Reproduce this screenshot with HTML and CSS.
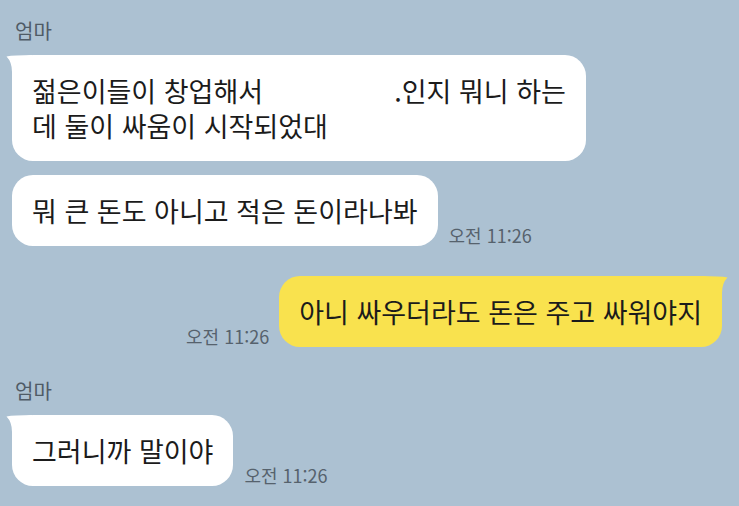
FILE: index.html
```html
<!DOCTYPE html>
<html lang="ko">
<head>
    <meta charset="UTF-8">
    <meta name="viewport" content="width=device-width, initial-scale=1.0">
    <title>엄마</title>
    <link rel="stylesheet" href="styles.css">
</head>
<body>
    <div class="chat">
        <div class="sender">엄마</div>
        <div class="row">
            <div class="bubble other first">
                <svg class="tail" viewBox="0 0 26 22"><path d="M0.5 1.5 Q8 0 26 0 V22 H6 V17 Q6 7 0.5 1.5 Z"/></svg>
                <span class="line">젊은이들이 창업해서<span class="blank"></span>.인지 뭐니 하는</span>
                <span class="line">데 둘이 싸움이 시작되었대</span>
            </div>
        </div>
        <div class="row">
            <div class="bubble other">뭐 큰 돈도 아니고 적은 돈이라나봐</div>
            <span class="time">오전 11:26</span>
        </div>

        <div class="row mine">
            <span class="time">오전 11:26</span>
            <div class="bubble me first">
                <svg class="tail" viewBox="0 0 26 22"><path d="M0.5 1.5 Q8 0 26 0 V22 H6 V17 Q6 7 0.5 1.5 Z"/></svg>
                아니 싸우더라도 돈은 주고 싸워야지
            </div>
        </div>

        <div class="sender second">엄마</div>
        <div class="row">
            <div class="bubble other first">
                <svg class="tail" viewBox="0 0 26 22"><path d="M0.5 1.5 Q8 0 26 0 V22 H6 V17 Q6 7 0.5 1.5 Z"/></svg>
                그러니까 말이야
            </div>
            <span class="time">오전 11:26</span>
        </div>
    </div>
</body>
</html>
```

FILE: styles.css
```css
body {
    margin: 0;
    background-color: #acc1d2;
    font-family: "Noto Sans CJK KR", "Noto Sans", sans-serif;
}
.chat {
    padding: 19px 17px 0 12px;
}
.sender {
    margin: 0 0 12px 3px;
    font-size: 20px;
    line-height: 24px;
    color: #4f5b66;
}
.sender.second {
    margin-top: 32px;
}
.row {
    display: flex;
    align-items: flex-end;
    gap: 11px;
    margin-bottom: 14px;
}
.row.mine {
    justify-content: flex-end;
    margin-top: 30px;
    gap: 10px;
}
.bubble {
    position: relative;
    padding: 18px 20px 18px 20px;
    border-radius: 21px;
    font-size: 27px;
    line-height: 35px;
    color: #1b1b1b;
    white-space: nowrap;
}
.bubble .line {
    display: block;
}
.bubble.other {
    background-color: #ffffff;
}
.bubble.me {
    background-color: #f9e24e;
}
.blank {
    display: inline-block;
    width: 131px;
}
.tail {
    position: absolute;
    top: 0;
    left: -6px;
    width: 26px;
    height: 22px;
    fill: #ffffff;
}
.bubble.me .tail {
    left: auto;
    right: -6px;
    transform: scaleX(-1);
    fill: #f9e24e;
}
.time {
    font-size: 18px;
    line-height: 22px;
    color: #56626d;
    white-space: nowrap;
}
```
